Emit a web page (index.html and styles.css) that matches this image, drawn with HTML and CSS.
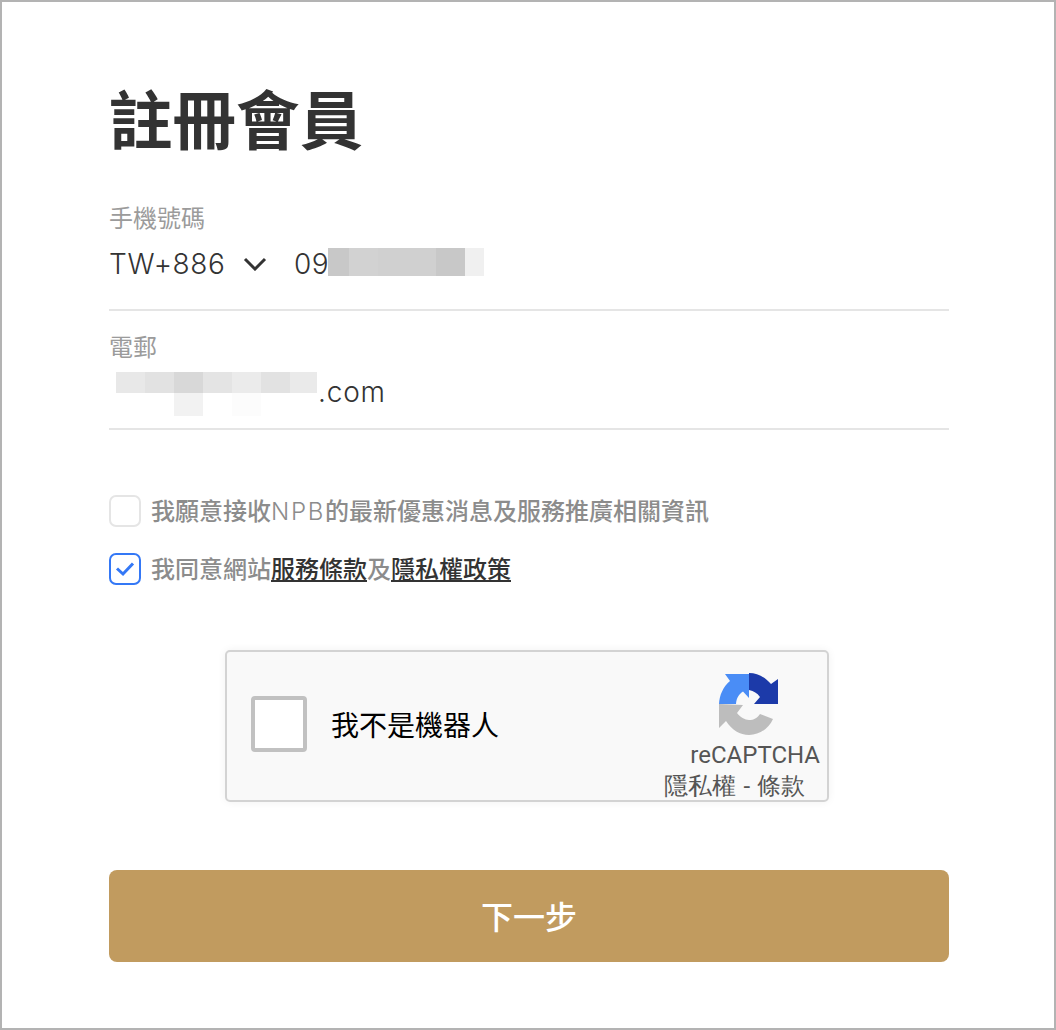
FILE: index.html
```html
<!DOCTYPE html>
<html lang="zh-Hant">
<head>
    <meta charset="UTF-8">
    <meta name="viewport" content="width=device-width, initial-scale=1.0">
    <title>註冊會員</title>
    <link rel="stylesheet" href="styles.css">
</head>
<body>
    <div class="container">
        <h1 class="title">註冊會員</h1>

        <div class="field field-phone">
            <div class="field-label">手機號碼</div>
            <div class="field-value">
                <span class="country">TW+886</span>
                <svg class="chevron" viewBox="0 0 24 14" width="24" height="14">
                    <path d="M2 2 L12 12 L22 2" fill="none" stroke="#333" stroke-width="3"/>
                </svg>
                <span class="phone">09</span>
                <div class="blur blur-phone">
                    <i class="w21 g-c8"></i><i class="w29 g-d2"></i><i class="w29 g-d0"></i><i class="w29 g-d0"></i><i class="w29 g-c8"></i><i class="w19 g-f0"></i>
                </div>
            </div>
        </div>

        <div class="field field-email">
            <div class="field-label">電郵</div>
            <div class="field-value">
                <div class="blur blur-email">
                    <i class="w29 g-e8"></i><i class="w29 g-e2"></i><i class="w29 g-d8"></i><i class="w29 g-e4"></i><i class="w29 g-eb"></i><i class="w29 g-e2"></i><i class="w27 g-ea"></i>
                    <i class="blur-drop drop-a"></i><i class="blur-drop drop-b"></i>
                </div>
                <span class="domain">.com</span>
            </div>
        </div>

        <div class="agree-list">
            <div class="agree">
                <span class="check"></span>
                <span class="agree-text">我願意接收<span class="latin">NPB</span>的最新優惠消息及服務推廣相關資訊</span>
            </div>
            <div class="agree">
                <span class="check checked">
                    <svg viewBox="0 0 20 16" width="20" height="16">
                        <path d="M2 7.5 L8 13 L18 2.5" fill="none" stroke="#3478f6" stroke-width="3"/>
                    </svg>
                </span>
                <span class="agree-text">我同意網站<a class="link" href="#">服務條款</a>及<a class="link" href="#">隱私權政策</a></span>
            </div>
        </div>

        <div class="captcha">
            <span class="captcha-box"></span>
            <span class="captcha-label">我不是機器人</span>
            <div class="captcha-brand">
                <svg class="captcha-logo" viewBox="0 0 60 62" width="60" height="62">
                    <path fill="#bdbdbd" d="M0 31 L0 55 L7 48 C13 57 21 62 30 62 C41 62 50 55 54 46 L41 41 C38 45 35 47 30 47 C26 47 21 44 18 40 L24 32 Z"/>
                    <path fill="#4a8df6" d="M0 31 L17 31 C17.5 25 20 21 24 18.5 L30 25 L30 1 L6 1 L11 8 C4 14 0.5 22 0 31 Z"/>
                    <path fill="#1c3aa9" d="M30 0 C39 0 47 5 52 11 L59 6 L59 31 L35 31 L41 24 C38 20 35 18 30 17 Z"/>
                </svg>
                <div class="captcha-name">reCAPTCHA</div>
                <div class="captcha-terms">隱私權 - 條款</div>
            </div>
        </div>

        <button class="next-btn">下一步</button>
    </div>
</body>
</html>
```

FILE: styles.css
```css
* {
    box-sizing: border-box;
}
body {
    margin: 0;
    background: #fff;
    font-family: "Noto Sans CJK TC", "Noto Sans", sans-serif;
}
.container {
    width: 1056px;
    height: 1030px;
    border: 2px solid #b3b3b3;
    padding: 0 105px 0 107px;
    overflow: hidden;
}
.title {
    margin: 70px 0 0;
    height: 88px;
    font-size: 63.5px;
    line-height: 88px;
    font-weight: 700;
    color: #333;
}
.field {
    border-bottom: 2px solid #e5e5e5;
}
.field-phone {
    margin-top: 43px;
    height: 108px;
}
.field-email {
    margin-top: 21px;
    height: 98px;
}
.field-label {
    height: 29px;
    font-size: 24px;
    line-height: 27px;
    color: #9b9b9b;
}
.field-value {
    display: flex;
    align-items: center;
    color: #333;
    font-family: Inter, "Open Sans", sans-serif;
    font-size: 28px;
    font-weight: 300;
}
.field-phone .field-value {
    height: 30px;
    margin-top: 15px;
}
.field-email .field-value {
    height: 29px;
    margin-top: 11px;
}
.country {
    width: 116px;
    padding-top: 4px;
    letter-spacing: 0.6px;
    white-space: nowrap;
}
.chevron {
    margin-left: 18px;
    margin-top: 4px;
}
.phone {
    margin-left: 27px;
    width: 34px;
    padding-top: 4px;
    letter-spacing: 0.5px;
}
.blur {
    display: flex;
    position: relative;
}
.blur i {
    display: block;
}
.blur-phone {
    height: 28px;
}
.blur-email {
    height: 21px;
    margin-left: 7px;
    align-self: flex-start;
}
.blur-drop {
    position: absolute;
    top: 21px;
    width: 29px;
    height: 23px;
}
.drop-a {
    left: 58px;
    background: #f2f2f2;
}
.drop-b {
    left: 116px;
    background: #fcfcfc;
}
.domain {
    margin-left: 1px;
    padding-top: 10px;
    letter-spacing: 0.8px;
}
.w19 { width: 19px; }
.w21 { width: 21px; }
.w27 { width: 27px; }
.w29 { width: 29px; }
.g-c8 { background: #c8c8c8; }
.g-d0 { background: #d0d0d0; }
.g-d2 { background: #d2d2d2; }
.g-d8 { background: #d8d8d8; }
.g-e2 { background: #e2e2e2; }
.g-e4 { background: #e4e4e4; }
.g-e8 { background: #e8e8e8; }
.g-ea { background: #eaeaea; }
.g-eb { background: #ebebeb; }
.g-f0 { background: #f0f0f0; }
.agree-list {
    margin-top: 65px;
    display: flex;
    flex-direction: column;
    gap: 26px;
}
.agree {
    display: flex;
    align-items: center;
    gap: 10px;
    height: 32px;
    font-size: 24px;
    font-weight: 500;
    color: #8c8c8c;
    white-space: nowrap;
}
.agree-text {
    padding-bottom: 4px;
}
.latin {
    font-family: Inter, sans-serif;
    font-weight: 300;
    letter-spacing: 1.7px;
}
.check {
    display: flex;
    align-items: center;
    justify-content: center;
    width: 32px;
    height: 32px;
    border: 2px solid #e5e5e5;
    border-radius: 7px;
    flex: none;
}
.checked {
    border-color: #3478f6;
}
.link {
    color: #333;
    text-decoration: underline;
}
.captcha {
    position: relative;
    display: flex;
    align-items: center;
    width: 604px;
    height: 152px;
    margin: 65px 0 0 116px;
    background: #f9f9f9;
    border: 2px solid #d3d3d3;
    border-radius: 5px;
    box-shadow: 0 0 8px rgba(0, 0, 0, 0.06);
    padding: 0 0 4px 24px;
}
.captcha-box {
    width: 56px;
    height: 56px;
    background: #fff;
    border: 4px solid #c1c1c1;
    border-radius: 4px;
}
.captcha-label {
    margin-left: 24px;
    font-size: 28px;
    color: #000;
}
.captcha-brand {
    position: absolute;
    top: 20px;
    right: 7px;
    width: 170px;
    height: 128px;
    color: #555;
    font-family: Roboto, sans-serif;
}
.captcha-logo {
    display: block;
    margin: 1px 0 0 69px;
}
.captcha-name {
    margin-top: 5px;
    text-align: right;
    font-size: 24px;
    line-height: 30px;
}
.captcha-terms {
    margin-right: 15px;
    text-align: right;
    font-size: 24px;
    line-height: 32px;
    word-spacing: 1px;
    white-space: nowrap;
}
.next-btn {
    display: block;
    width: 840px;
    height: 92px;
    margin-top: 68px;
    padding-bottom: 4px;
    background-color: #c19b5f;
    color: #fff;
    border: none;
    border-radius: 8px;
    font-family: inherit;
    font-size: 32px;
    font-weight: 500;
    cursor: pointer;
}
```
